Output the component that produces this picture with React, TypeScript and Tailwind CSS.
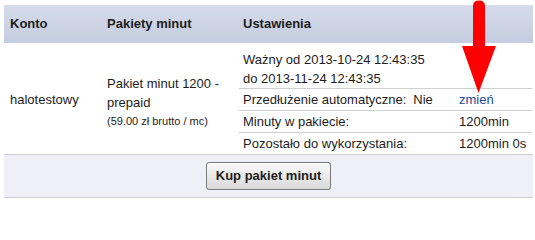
const font = { fontFamily: '"Liberation Sans", Arial, sans-serif' }

const rows = [
    { label: 'Minuty w pakiecie:', value: '1200min' },
    { label: 'Pozostało do wykorzystania:', value: '1200min 0s' },
]

const Arrow = () => (
    <svg className="absolute left-[460px] top-0" width="40" height="96" viewBox="0 0 40 96">
        <path d="M13 6 Q13 0.5 19 0.5 Q25 0.5 25 6 L25 46 L36 46 L18.5 93 L2 46 L13 46 Z" fill="#ff0000" />
    </svg>
)

const App = () => {
    return (
        <div className="relative w-[535px] h-[204px] bg-white text-[13px] text-[#1c1c1c]" style={font}>
            <div className="pl-[4px] pr-[2px] pt-[5px]">
                {/* header */}
                <div className="grid grid-cols-[97px_136px_1fr] h-[38px] items-center font-bold bg-gradient-to-b from-[#d5dbe9] to-[#c4cce0]">
                    <div className="pl-[6px]">Konto</div>
                    <div className="pl-[6px]">Pakiety minut</div>
                    <div className="pl-[6px]">Ustawienia</div>
                </div>

                {/* body */}
                <div className="grid grid-cols-[97px_136px_1fr] border-b border-[#cfcfcf]">
                    <div className="pl-[6px] flex items-center pt-[3px]">halotestowy</div>
                    <div className="pl-[6px] flex flex-col justify-center pt-[7px]">
                        <div className="leading-[19px]">Pakiet minut 1200 -</div>
                        <div className="leading-[19px]">prepaid</div>
                        <div className="text-[11px] leading-[19px]">(59.00 zł brutto / mc)</div>
                    </div>
                    <div className="pt-[4px] pl-[2px] pr-[1px]">
                        <div className="border-b border-[#cfcfcf] pt-[3px] pl-[4px] leading-[19px]">
                            <div>Ważny od 2013-10-24 12:43:35</div>
                            <div>do 2013-11-24 12:43:35</div>
                        </div>
                        <div className="grid grid-cols-[220px_1fr] h-[22px] items-center border-b border-[#cfcfcf]">
                            <div className="pl-[4px]">
                                Przedłużenie automatyczne:<span className="ml-[7px]">Nie</span>
                            </div>
                            <a href="#" className="text-[#23479b]">zmień</a>
                        </div>
                        {rows.map((row, i) => (
                            <div
                                key={row.label}
                                className={`grid grid-cols-[220px_1fr] items-center ${i === 0 ? 'h-[22px] border-b border-[#cfcfcf]' : 'h-[21px]'}`}
                            >
                                <div className="pl-[4px]">{row.label}</div>
                                <div>{row.value}</div>
                            </div>
                        ))}
                    </div>
                </div>

                {/* footer */}
                <div className="h-[43px] flex items-center justify-center bg-[#eff0f7] border-b border-[#cfcfcf]">
                    <button className="h-[28px] px-[9px] rounded-[3px] border border-[#7a7a7a] bg-gradient-to-b from-[#fafafa] to-[#d9d9d9] font-bold text-[13px] text-[#1c1c1c]" style={font}>
                        Kup pakiet minut
                    </button>
                </div>
            </div>
            <Arrow />
        </div>
    )
}

export default App
